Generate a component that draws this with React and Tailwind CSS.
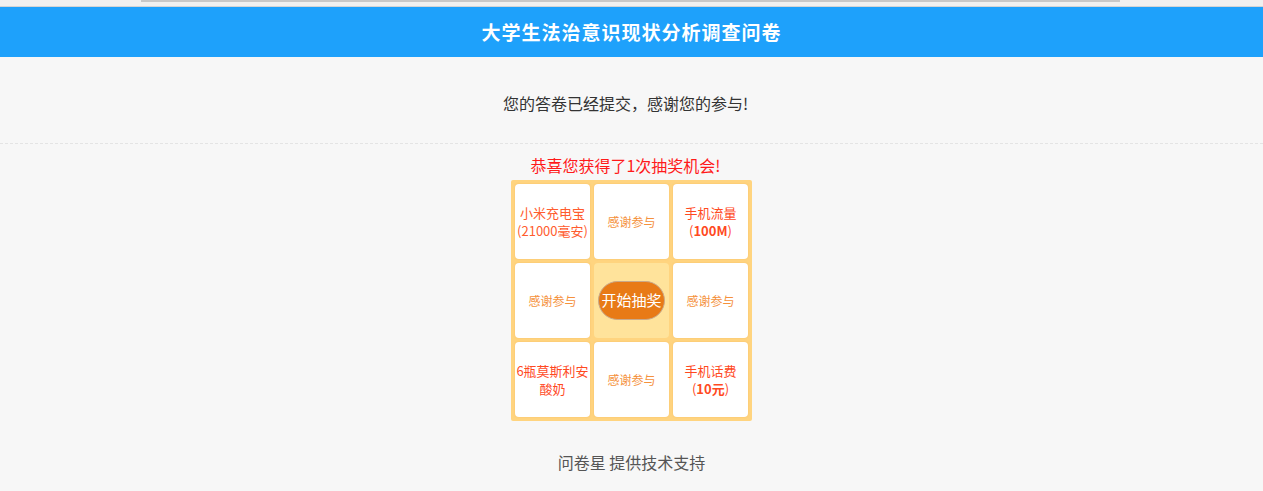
import React from "react";

const font = { fontFamily: '"Noto Sans CJK SC", "Noto Sans", sans-serif' };

function Cell({ children, className = "" }) {
  return (
    <div
      className={
        "flex h-[75px] w-[75px] flex-col items-center justify-center rounded-[4px] bg-white text-center leading-[18px] shadow-[0_0_2px_rgba(230,160,60,0.35)] " +
        className
      }
    >
      {children}
    </div>
  );
}

export default function App() {
  return (
    <div className="min-h-[491px] w-full bg-[#f7f7f7]" style={font}>
      <div className="relative h-[7px] border-b border-[#d4d4d4] bg-[#f0f0f0]">
        <div className="absolute left-[141px] top-0 h-[2px] w-[979px] bg-[#c8c8c8]" />
      </div>
      <div className="flex h-[50px] items-center justify-center bg-[#1ea1fb]">
        <h1 className="text-[19px] font-bold tracking-[1px] text-white">大学生法治意识现状分析调查问卷</h1>
      </div>
      <div className="flex h-[87px] justify-center border-b border-dashed border-[#e4e4e4] pr-[12px] pt-[35px]">
        <p className="text-[16px] leading-[22px] text-[#333]">您的答卷已经提交，感谢您的参与!</p>
      </div>
      <div className="flex flex-col items-center">
        <p className="mr-[12px] mt-[10px] text-[16px] leading-[22px] text-[#ff1a1a]">恭喜您获得了1次抽奖机会!</p>
        <div className="mt-[4px] grid grid-cols-[75px_75px_75px] gap-[4px] rounded-[2px] bg-[#ffd47f] p-[4px]">
          <Cell className="text-[13px] text-[#ff5c2e]">
            <span>小米充电宝</span>
            <span>(21000毫安)</span>
          </Cell>
          <Cell className="text-[12px] text-[#f5913c]">感谢参与</Cell>
          <Cell className="text-[13px] text-[#ff4a1f]">
            <span>手机流量</span>
            <span>
              (<b className="font-bold">100M</b>)
            </span>
          </Cell>
          <Cell className="text-[12px] text-[#f5913c]">感谢参与</Cell>
          <div className="flex h-[75px] w-[75px] items-center justify-center rounded-[4px] bg-[#ffe39b]">
            <button className="flex h-[39px] w-[67px] items-center justify-center rounded-[20px] border border-[#c9a98a] bg-[#e87a16] text-[15px] text-white">
              开始抽奖
            </button>
          </div>
          <Cell className="text-[12px] text-[#f5913c]">感谢参与</Cell>
          <Cell className="text-[13px] text-[#ff4a1f]">
            <span>6瓶莫斯利安</span>
            <span>酸奶</span>
          </Cell>
          <Cell className="text-[12px] text-[#f5913c]">感谢参与</Cell>
          <Cell className="text-[13px] text-[#ff4a1f]">
            <span>手机话费</span>
            <span>
              (<b className="font-bold">10元</b>)
            </span>
          </Cell>
        </div>
        <p className="mt-[30px] text-[16px] leading-[22px] text-[#555]">问卷星 提供技术支持</p>
      </div>
    </div>
  );
}
